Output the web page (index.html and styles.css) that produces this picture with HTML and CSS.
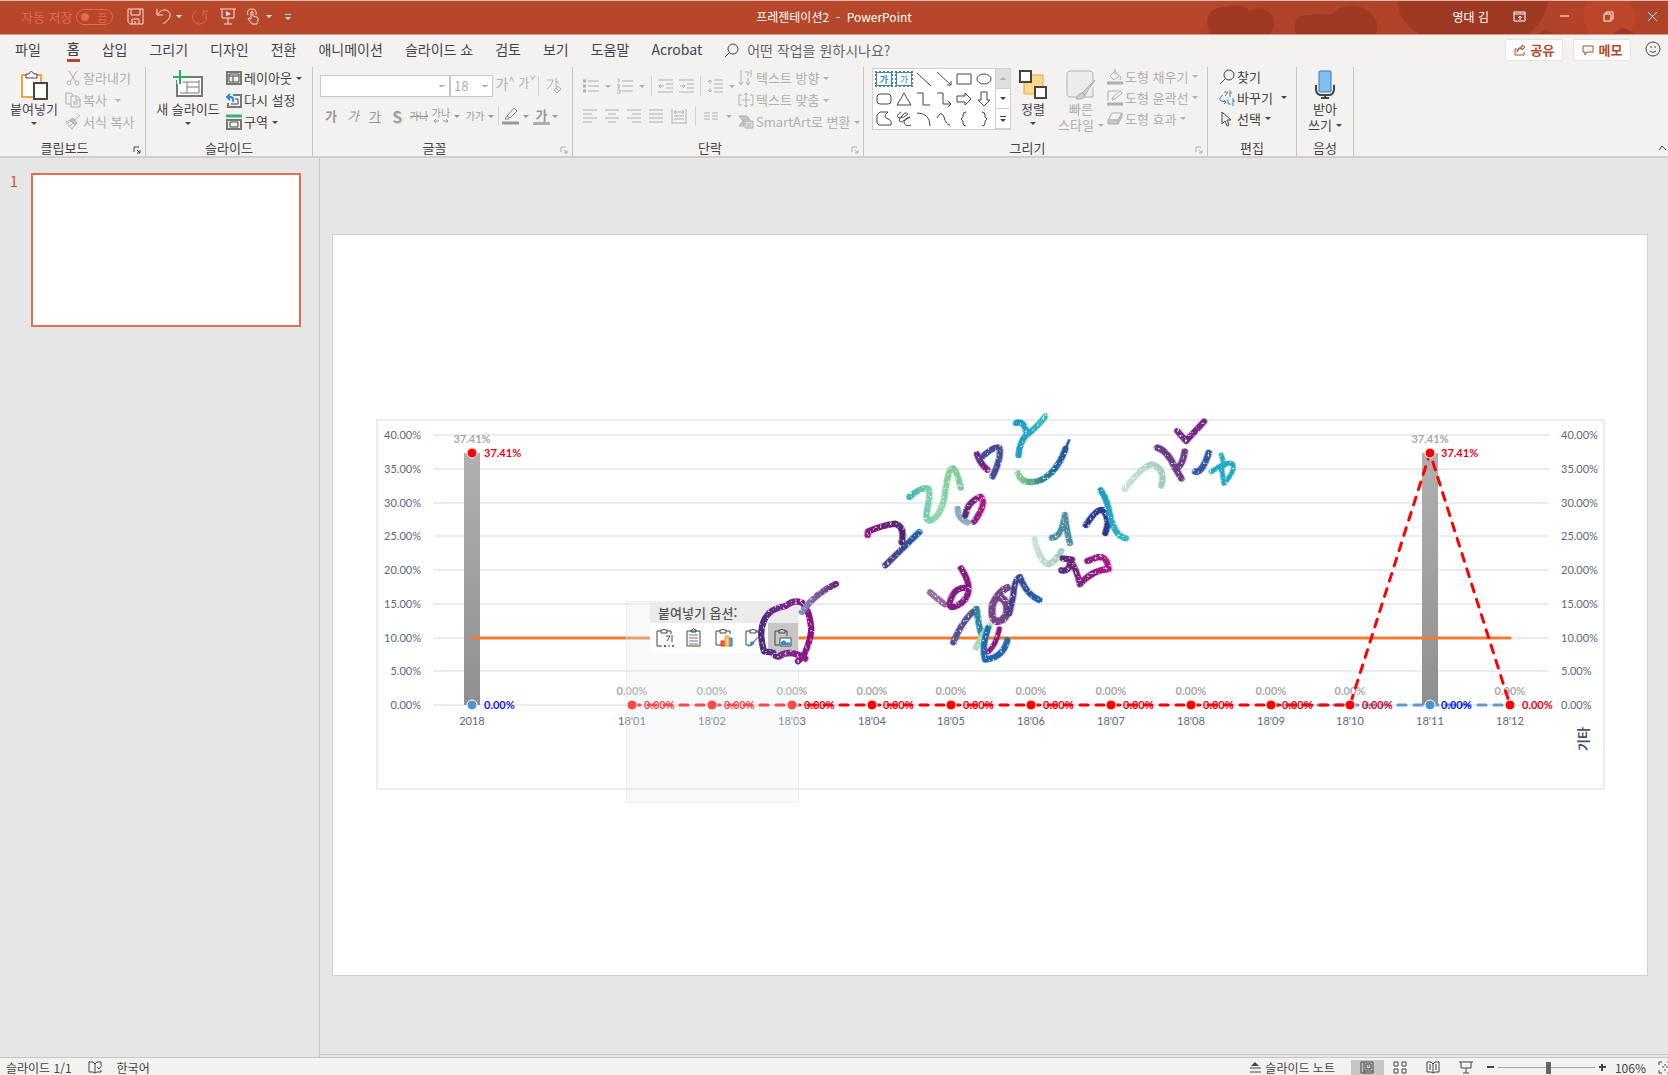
FILE: index.html
```html
<!DOCTYPE html>
<html lang="ko">
<head>
    <meta charset="UTF-8">
    <meta name="viewport" content="width=device-width, initial-scale=1.0">
    <title>프레젠테이션2 - PowerPoint</title>
    <link rel="stylesheet" href="styles.css">
</head>
<body>
    <header class="titlebar">
        <svg class="titlebar-art" width="470" height="33" viewBox="0 0 470 33" aria-hidden="true">
            <path class="art-mid" d="M0 33Q20 0 60 0H470V33Z"/>
            <path class="art-dark" d="M12 33Q2 8 28 5Q44 2 52 10Q62 4 70 10Q82 22 72 33ZM98 33Q92 14 112 14Q126 12 134 14Q142 3 160 5Q184 14 178 33ZM200 0H350Q346 22 330 33H222Q200 22 200 0Z"/>
            <path class="art-light" d="M390 0H430Q446 18 430 33H392Q380 14 390 0Z"/>
            <path class="art-dark" d="M416 33Q424 22 436 33ZM340 33Q348 26 356 33Z"/>
        </svg>
        <div class="quick-access">
            <span class="autosave">자동 저장</span>
            <button class="toggle" aria-label="자동 저장"><span class="toggle-dot"></span>끔</button>
            <button class="qa-save" aria-label="저장"><svg width="17" height="17" viewBox="0 0 17 17"><path d="M1 1H16V16H3L1 14ZM4 1V7H13V1M5 16V11H12V16M8 16V13"/></svg></button>
            <button class="qa-undo" aria-label="실행 취소"><svg width="16" height="17" viewBox="0 0 16 17"><path d="M1 1V7H7M1 7Q5 1 10 2Q15 4 14 9Q12 13 7 16"/></svg><span class="caret"></span></button>
            <button class="qa-redo" aria-label="다시 실행"><svg width="17" height="17" viewBox="0 0 17 17"><path d="M5 3A7 7 0 1 0 12 3M12 8V3H17"/></svg></button>
            <button class="qa-show" aria-label="처음부터"><svg width="16" height="17" viewBox="0 0 16 17"><path d="M0 1H16M2 1V10H14V1M8 10V16M4 16H12"/><path class="solid" d="M6 3L11 6L6 8Z"/></svg></button>
            <button class="qa-touch" aria-label="터치 모드"><svg width="14" height="17" viewBox="0 0 14 17"><path d="M5 11V4Q6 2 7 4V8L11 9Q13 10 12 12L11 16H6L2 11Q2 9 5 11M2 7Q0 1 6 1Q11 1 10 7"/></svg><span class="caret"></span></button>
            <button class="qa-more" aria-label="빠른 실행 도구 모음 사용자 지정"><span class="bar"></span><span class="caret"></span></button>
        </div>
        <div class="doc-title">프레젠테이션2&nbsp; - &nbsp;PowerPoint</div>
        <div class="window-area">
            <span class="user">영대 김</span>
            <button aria-label="리본 메뉴 표시 옵션"><svg width="13" height="11" viewBox="0 0 13 11"><path d="M1 1H12V10H1ZM1 3H12M7 9V5M5 7L7 5L9 7"/></svg></button>
            <button aria-label="최소화"><svg width="11" height="11" viewBox="0 0 11 11"><path d="M1 5H10"/></svg></button>
            <button aria-label="이전 크기로"><svg width="11" height="11" viewBox="0 0 11 11"><path d="M1 3H8V10H1ZM3 3V1H10V8H8"/></svg></button>
            <button aria-label="닫기"><svg width="11" height="11" viewBox="0 0 11 11"><path d="M1 1L10 10M10 1L1 10"/></svg></button>
        </div>
    </header>

    <nav class="tabs">
        <button class="tab tab-file">파일</button>
        <button class="tab tab-active">홈</button>
        <button class="tab">삽입</button>
        <button class="tab">그리기</button>
        <button class="tab">디자인</button>
        <button class="tab">전환</button>
        <button class="tab">애니메이션</button>
        <button class="tab">슬라이드 쇼</button>
        <button class="tab">검토</button>
        <button class="tab">보기</button>
        <button class="tab">도움말</button>
        <button class="tab">Acrobat</button>
        <label class="tell-me" for="tellMe">
            <svg class="icon" width="15" height="15" viewBox="0 0 15 15"><circle cx="9" cy="6" r="5"/><path d="M5 10L1 14"/></svg>
            <input id="tellMe" type="text" placeholder="어떤 작업을 원하시나요?">
        </label>
        <div class="tab-actions">
            <button class="action"><svg width="12" height="12" viewBox="0 0 12 12"><path d="M3 5H1V11H10V8M3 8Q4 4 8 4V6L11 3L8 1V3Q4 3 3 8"/></svg>공유</button>
            <button class="action"><svg width="12" height="12" viewBox="0 0 12 12"><path d="M1 2H11V8H5L3 11V8H1Z"/></svg>메모</button>
            <button class="smile" aria-label="의견 보내기"><svg class="icon" width="17" height="17" viewBox="0 0 17 17"><circle cx="8" cy="8" r="7"/><path d="M6 5V7M10 5V7M5 10Q8 13 11 10"/></svg></button>
        </div>
    </nav>

    <section class="ribbon">
        <div class="group group-clipboard">
            <div class="group-body">
                <button class="big big-paste">
                    <svg class="icon" width="28" height="30" viewBox="0 0 28 30"><path fill="#fff" stroke="#f2a33c" stroke-width="2" d="M2 5H21V27H2Z"/><path fill="#fff" d="M6 8V4H9Q11 -1 14 4H17V8Z"/><path fill="#fff" stroke-width="2" d="M14 13H27V29H14Z"/></svg>
                    <span>붙여넣기</span><span class="caret"></span>
                </button>
                <div class="rows">
                    <button class="row off"><svg class="icon" width="16" height="16" viewBox="0 0 16 16"><path d="M4 1L11 12M12 1L5 12"/><circle cx="4" cy="13" r="2"/><circle cx="12" cy="13" r="2"/></svg>잘라내기</button>
                    <button class="row off"><svg class="icon" width="16" height="16" viewBox="0 0 16 16"><path d="M6 12H1V1H6L8 3M6 4H12L15 7V15H6ZM11 4V8H15M8 10H13M8 12H13"/></svg>복사<span class="caret caret-far"></span></button>
                    <button class="row off"><svg class="icon" width="16" height="16" viewBox="0 0 16 16"><path fill="#c8c6c4" d="M15 1L10 6M8 4L12 9L10 11L5 6Z"/><path d="M5 6L1 8L7 15L10 11M3 9L6 7M5 12L8 9"/></svg>서식 복사</button>
                </div>
            </div>
            <div class="group-label"><span>클립보드</span><button class="launcher" aria-label="클립보드 옵션"><svg class="icon" width="8" height="8" viewBox="0 0 8 8"><path d="M1 6V1H6M4 4L7 7M7 4V7H4"/></svg></button></div>
        </div>

        <div class="group group-slides">
            <div class="group-body">
                <button class="big big-slide">
                    <svg class="icon" width="30" height="30" viewBox="0 0 30 30"><path fill="#fff" stroke="#777" stroke-width="2" d="M4 7H29V26H4Z"/><path stroke="#777" d="M7 12H26M14 12V23M14 17H26M7 23H26V10"/><path stroke="#f3f2f1" stroke-width="6" d="M0 7H12M7 1V14"/><path stroke="#22b05a" stroke-width="2" d="M0 7H14M7 0V14"/></svg>
                    <span>새 슬라이드</span><span class="caret"></span>
                </button>
                <div class="rows">
                    <button class="row"><svg class="icon" width="16" height="14" viewBox="0 0 16 14"><path stroke="#777" stroke-width="2" d="M1 1H15V13H1Z"/><path d="M3 5H13M7 5V11M3 3H13V11H3Z"/></svg>레이아웃<span class="caret"></span></button>
                    <button class="row"><svg class="icon" width="16" height="15" viewBox="0 0 16 15"><path stroke="#777" stroke-width="2" d="M7 2H15V14H2V10"/><path d="M5 11H12V6H9"/><path stroke="#2b8ad0" stroke-width="2" d="M4 1L1 4L4 7M1 4H5Q8 5 7 9"/></svg>다시 설정</button>
                    <button class="row"><svg class="icon" width="16" height="16" viewBox="0 0 16 16"><path stroke="#3cb371" stroke-width="3" d="M0 2H16"/><path stroke="#777" stroke-width="2" d="M1 6H15V15H1Z"/><path d="M4 8H12V13H4Z"/></svg>구역<span class="caret"></span></button>
                </div>
            </div>
            <div class="group-label"><span>슬라이드</span></div>
        </div>

        <div class="group group-font off">
            <div class="group-body stack">
                <div class="tools">
                    <select class="box font-name" aria-label="글꼴"><option></option></select>
                    <select class="box font-size" aria-label="글꼴 크기"><option>18</option></select>
                    <button class="glyph grow" aria-label="글꼴 크기 크게">가<sup>^</sup></button>
                    <button class="glyph grow small" aria-label="글꼴 크기 작게">가<sup>ˇ</sup></button>
                    <span class="sep"></span>
                    <button class="glyph" aria-label="모든 서식 지우기"><svg class="icon" width="18" height="18" viewBox="0 0 18 18"><path d="M2 3H8Q7 9 2 12M11 1V10M11 5H14M9 13L13 9L16 12L12 16ZM11 11L14 14"/></svg></button>
                </div>
                <div class="tools letters">
                    <button class="glyph"><b>가</b></button>
                    <button class="glyph"><i>가</i></button>
                    <button class="glyph"><u>가</u></button>
                    <button class="glyph shadow-s">S</button>
                    <button class="glyph tiny"><s>가나</s></button>
                    <button class="glyph tiny spacing"><span>가나</span><svg class="icon" width="16" height="6" viewBox="0 0 16 6"><path d="M1 3H6M10 3H15M3 1L1 3L3 5M13 1L15 3L13 5"/></svg></button>
                    <span class="caret"></span>
                    <button class="glyph tiny">가가</button>
                    <span class="caret"></span>
                    <span class="sep"></span>
                    <button class="glyph" aria-label="강조 색"><svg class="icon" width="17" height="18" viewBox="0 0 17 18"><path stroke="#8a8886" d="M5 9L12 1L15 4L8 11ZM5 9L3 12H7"/><path stroke-width="3" d="M0 16H17"/></svg></button>
                    <span class="caret"></span>
                    <button class="glyph swatch"><b>가</b></button>
                    <span class="caret"></span>
                </div>
            </div>
            <div class="group-label"><span>글꼴</span><button class="launcher" aria-label="글꼴 옵션"><svg class="icon" width="8" height="8" viewBox="0 0 8 8"><path d="M1 6V1H6M4 4L7 7M7 4V7H4"/></svg></button></div>
        </div>

        <div class="group group-paragraph off">
            <div class="group-body">
                <div class="stack">
                    <div class="tools lines">
                        <button class="glyph" aria-label="글머리 기호"><svg class="icon" width="16" height="16" viewBox="0 0 16 16"><path d="M5 3H16M5 8H16M5 13H16"/><path stroke-width="3" d="M0 3H3M0 8H3M0 13H3"/></svg></button>
                        <span class="caret"></span>
                        <button class="glyph" aria-label="번호 매기기"><svg class="icon" width="16" height="16" viewBox="0 0 16 16"><path d="M5 3H16M5 8H16M5 13H16M1 1H2V5M0 7H3L1 10H3M0 12H3V15H0"/></svg></button>
                        <span class="caret"></span>
                        <span class="sep"></span>
                        <button class="glyph" aria-label="목록 수준 줄임"><svg class="icon" width="15" height="16" viewBox="0 0 15 16"><path d="M0 2H15M8 6H15M8 10H15M0 14H15M1 8H6M3 6L1 8L3 10"/></svg></button>
                        <button class="glyph" aria-label="목록 수준 늘림"><svg class="icon" width="15" height="16" viewBox="0 0 15 16"><path d="M0 2H15M8 6H15M8 10H15M0 14H15M1 8H6M4 6L6 8L4 10"/></svg></button>
                        <span class="sep"></span>
                        <button class="glyph" aria-label="줄 간격"><svg class="icon" width="16" height="16" viewBox="0 0 16 16"><path d="M7 2H16M7 6H16M7 10H16M7 14H16M3 2V6M3 10V14M1 4L3 2L5 4M1 12L3 14L5 12"/></svg></button>
                        <span class="caret"></span>
                    </div>
                    <div class="tools aligns">
                        <button class="glyph" aria-label="왼쪽 맞춤"><svg class="icon" width="14" height="15" viewBox="0 0 14 15"><path d="M0 1H14M0 5H9M0 9H14M0 13H9"/></svg></button>
                        <button class="glyph" aria-label="가운데 맞춤"><svg class="icon" width="14" height="15" viewBox="0 0 14 15"><path d="M0 1H14M3 5H11M0 9H14M3 13H11"/></svg></button>
                        <button class="glyph" aria-label="오른쪽 맞춤"><svg class="icon" width="14" height="15" viewBox="0 0 14 15"><path d="M0 1H14M5 5H14M0 9H14M5 13H14"/></svg></button>
                        <button class="glyph" aria-label="양쪽 맞춤"><svg class="icon" width="14" height="15" viewBox="0 0 14 15"><path d="M0 1H14M0 5H14M0 9H14M0 13H14"/></svg></button>
                        <button class="glyph" aria-label="균등 분할"><svg class="icon" width="16" height="15" viewBox="0 0 16 15"><path d="M1 0V15M15 0V15M3 3H13M5 1L3 3L5 5M11 1L13 3L11 5M3 7H13M3 10H13M1 14H15"/></svg></button>
                        <span class="sep"></span>
                        <button class="glyph" aria-label="열"><svg class="icon" width="14" height="15" viewBox="0 0 14 15"><path d="M0 4H6M8 4H14M0 7H6M8 7H14M0 10H6M8 10H14"/></svg></button>
                        <span class="caret"></span>
                    </div>
                </div>
                <div class="rows">
                    <button class="row off"><svg class="icon" width="16" height="16" viewBox="0 0 16 16"><path d="M3 0V15M1 12L3 15L5 12M10 8V15M8 12L10 15L12 12M7 2H11L9 6M13 0V7"/></svg>텍스트 방향<span class="caret"></span></button>
                    <button class="row off"><svg class="icon" width="16" height="16" viewBox="0 0 16 16"><path d="M4 3H1V13H4M12 3H15V13H12M8 1V15M6 3L8 1L10 3M6 13L8 15L10 13M4 8H12"/></svg>텍스트 맞춤<span class="caret"></span></button>
                    <button class="row off"><svg class="icon" width="16" height="14" viewBox="0 0 16 14"><path fill="#c8c6c4" d="M1 1H9L12 5H6V11H1L5 6Z"/><path fill="#e1dfdd" d="M7 6H15V13H7ZM9 9H13M9 11H13"/></svg>SmartArt로 변환<span class="caret"></span></button>
                </div>
            </div>
            <div class="group-label"><span>단락</span><button class="launcher" aria-label="단락 옵션"><svg class="icon" width="8" height="8" viewBox="0 0 8 8"><path d="M1 6V1H6M4 4L7 7M7 4V7H4"/></svg></button></div>
        </div>

        <div class="group group-drawing">
            <div class="group-body">
                <div class="gallery">
                    <div class="shapes">
                        <button class="textbox">가</button>
                        <button class="textbox vertical">가</button>
                        <button aria-label="선"><svg class="icon" width="16" height="16" viewBox="0 0 16 16"><path d="M1 2L15 15"/></svg></button>
                        <button aria-label="화살표"><svg class="icon" width="16" height="16" viewBox="0 0 16 16"><path d="M1 1L15 14M15 10V14H11"/></svg></button>
                        <button aria-label="직사각형"><svg class="icon" width="16" height="16" viewBox="0 0 16 16"><path d="M1 3H15V13H1Z"/></svg></button>
                        <button aria-label="타원"><svg class="icon" width="16" height="16" viewBox="0 0 16 16"><ellipse cx="8" cy="8" rx="7" ry="5"/></svg></button>
                        <button aria-label="둥근 직사각형"><svg class="icon" width="16" height="16" viewBox="0 0 16 16"><rect x="1" y="3" width="14" height="10" rx="3"/></svg></button>
                        <button aria-label="삼각형"><svg class="icon" width="16" height="16" viewBox="0 0 16 16"><path d="M8 2L15 14H1Z"/></svg></button>
                        <button aria-label="꺾인 연결선"><svg class="icon" width="16" height="16" viewBox="0 0 16 16"><path d="M1 2H7V14H14"/></svg></button>
                        <button aria-label="꺾인 화살표"><svg class="icon" width="16" height="16" viewBox="0 0 16 16"><path d="M1 2H7V13H15M12 10L15 13L12 16"/></svg></button>
                        <button aria-label="오른쪽 화살표"><svg class="icon" width="16" height="16" viewBox="0 0 16 16"><path d="M1 5H9V2L15 8L9 14V11H1Z"/></svg></button>
                        <button aria-label="아래쪽 화살표"><svg class="icon" width="16" height="16" viewBox="0 0 16 16"><path d="M5 1V9H2L8 15L14 9H11V1Z"/></svg></button>
                        <button aria-label="자유형"><svg class="icon" width="16" height="16" viewBox="0 0 16 16"><path d="M1 4L4 1H12Q6 6 12 8Q16 9 15 14H3L1 12Z"/></svg></button>
                        <button aria-label="자유 곡선"><svg class="icon" width="16" height="16" viewBox="0 0 16 16"><path d="M5 1Q-1 5 3 7Q8 7 12 3Q9 0 6 5Q1 10 5 11Q10 9 14 6Q8 7 8 12Q10 16 15 14"/></svg></button>
                        <button aria-label="원호"><svg class="icon" width="16" height="16" viewBox="0 0 16 16"><path d="M1 2Q14 2 14 15"/></svg></button>
                        <button aria-label="곡선"><svg class="icon" width="16" height="16" viewBox="0 0 16 16"><path d="M1 7Q5 -1 8 6Q10 14 14 14"/></svg></button>
                        <button aria-label="왼쪽 중괄호"><svg class="icon" width="16" height="16" viewBox="0 0 16 16"><path d="M10 1Q7 1 7 4V6L5 8L7 10V12Q7 15 10 15"/></svg></button>
                        <button aria-label="오른쪽 중괄호"><svg class="icon" width="16" height="16" viewBox="0 0 16 16"><path d="M6 1Q9 1 9 4V6L11 8L9 10V12Q9 15 6 15"/></svg></button>
                    </div>
                    <div class="gallery-nav">
                        <button class="disabled" aria-label="위로"><span class="caret up"></span></button>
                        <button aria-label="아래로"><span class="caret"></span></button>
                        <button aria-label="자세히"><span class="bar"></span><span class="caret"></span></button>
                    </div>
                </div>
                <button class="big big-arrange">
                    <svg class="icon" width="28" height="30" viewBox="0 0 28 30"><path fill="#fbd98a" stroke="#f2a33c" d="M5 5H24V24H5Z"/><path fill="#fff" stroke-width="2" d="M1 1H12V12H1ZM16 17H27V28H16Z"/></svg>
                    <span>정렬</span><span class="caret"></span>
                </button>
                <button class="big big-style off">
                    <svg class="icon" width="30" height="30" viewBox="0 0 30 30"><path fill="#ececec" d="M3 1H25L27 3V27H3L1 25V3Z"/><path fill="#f3f2f1" stroke="#f3f2f1" stroke-width="4" d="M29 12L14 28"/><path fill="#d0d0d0" d="M29 10L16 23L19 25ZM16 23Q12 23 10 29Q18 30 19 25Z"/></svg>
                    <span>빠른</span><span>스타일<span class="caret"></span></span>
                </button>
                <div class="rows tight">
                    <button class="row off"><svg class="icon" width="16" height="16" viewBox="0 0 16 16"><path d="M3 7L8 2L12 7L7 11ZM8 0V5M13 7Q15 10 13 11"/><path stroke-width="3" d="M0 14H16"/></svg>도형 채우기<span class="caret"></span></button>
                    <button class="row off"><svg class="icon" width="16" height="16" viewBox="0 0 16 16"><path d="M11 1H1V11M5 10L6 7L13 1L15 3L8 9Z"/><path stroke-width="3" d="M0 14H16"/></svg>도형 윤곽선<span class="caret"></span></button>
                    <button class="row off"><svg class="icon" width="16" height="14" viewBox="0 0 16 14"><path d="M5 1H15L11 8H1Z"/><path fill="#c8c6c4" d="M1 8V12H11L15 5V1L11 8ZM11 8V12"/></svg>도형 효과<span class="caret"></span></button>
                </div>
            </div>
            <div class="group-label"><span>그리기</span><button class="launcher off" aria-label="그리기 옵션"><svg class="icon" width="8" height="8" viewBox="0 0 8 8"><path d="M1 6V1H6M4 4L7 7M7 4V7H4"/></svg></button></div>
        </div>

        <div class="group group-edit">
            <div class="group-body">
                <div class="rows tight">
                    <button class="row"><svg class="icon" width="16" height="16" viewBox="0 0 16 16"><circle cx="10" cy="6" r="5"/><path d="M6 10L1 15"/></svg>찾기</button>
                    <button class="row"><svg class="icon" width="16" height="16" viewBox="0 0 16 16"><path stroke="#777" d="M5 2H9L6 6M11 0V7M11 3H13"/><path stroke="#2b8ad0" d="M4 5Q-1 8 2 11L7 12M5 10L7 12L5 14M9 9V14H12M14 8V16M14 11H16"/></svg>바꾸기<span class="caret caret-far"></span></button>
                    <button class="row"><svg class="icon" width="16" height="16" viewBox="0 0 16 16"><path d="M3 1V13L6 10L8 15L10 14L8 9H12Z"/></svg>선택<span class="caret"></span></button>
                </div>
            </div>
            <div class="group-label"><span>편집</span></div>
        </div>

        <div class="group group-voice">
            <div class="group-body">
                <button class="big big-mic">
                    <svg class="icon" width="20" height="30" viewBox="0 0 20 30"><rect x="4" y="1" width="12" height="21" rx="1" fill="#83beec" stroke="#1e7fcb"/><path stroke-width="2" d="M1 15V20Q2 25 6 25H14Q18 25 19 20V15M10 25V28M6 28H14"/></svg>
                    <span>받아</span><span>쓰기<span class="caret"></span></span>
                </button>
            </div>
            <div class="group-label"><span>음성</span></div>
        </div>
        <button class="collapse" aria-label="리본 메뉴 축소"><svg class="icon" width="9" height="6" viewBox="0 0 9 6"><path d="M1 5L4 1L8 5"/></svg></button>
    </section>

    <main class="workspace">
        <aside class="thumbs">
            <span class="thumb-number">1</span>
            <button class="thumb" aria-label="슬라이드 1"></button>
        </aside>
        <section class="editor">
            <div class="slide">
                <!-- combo chart: bars, 10% baseline and two dashed series -->
                <svg class="chart" viewBox="333 235 1314 740">
                    <defs>
                        <linearGradient id="barFill" x1="0" y1="0" x2="0" y2="1"><stop offset="0" stop-color="#b0b0b0"/><stop offset="1" stop-color="#8f8f8f"/></linearGradient>
                    </defs>
                    <rect class="frame" x="377" y="420" width="1227" height="369"/>
                    <path class="grid" d="M433 435H1549M433 469H1549M433 503H1549M433 536H1549M433 570H1549M433 604H1549M433 638H1549M433 671H1549M433 705H1549"/>
                    <rect class="column" x="464" y="453" width="16" height="252"/>
                    <rect class="column" x="1422" y="453" width="16" height="252"/>
                    <path class="line-base" d="M472 638H1510"/>
                    <path class="line-blue" d="M1270 705H1510"/>
                    <g class="axis axis-left">
                        <text x="421" y="439">40.00%</text>
                        <text x="421" y="473">35.00%</text>
                        <text x="421" y="507">30.00%</text>
                        <text x="421" y="540">25.00%</text>
                        <text x="421" y="574">20.00%</text>
                        <text x="421" y="608">15.00%</text>
                        <text x="421" y="642">10.00%</text>
                        <text x="421" y="675">5.00%</text>
                        <text x="421" y="709">0.00%</text>
                    </g>
                    <g class="axis">
                        <text x="1561" y="439">40.00%</text>
                        <text x="1561" y="473">35.00%</text>
                        <text x="1561" y="507">30.00%</text>
                        <text x="1561" y="540">25.00%</text>
                        <text x="1561" y="574">20.00%</text>
                        <text x="1561" y="608">15.00%</text>
                        <text x="1561" y="642">10.00%</text>
                        <text x="1561" y="675">5.00%</text>
                        <text x="1561" y="709">0.00%</text>
                    </g>
                    <g class="axis axis-bottom">
                        <text x="472" y="725">2018</text>
                        <text x="632" y="725">18'01</text>
                        <text x="712" y="725">18'02</text>
                        <text x="792" y="725">18'03</text>
                        <text x="872" y="725">18'04</text>
                        <text x="951" y="725">18'05</text>
                        <text x="1031" y="725">18'06</text>
                        <text x="1111" y="725">18'07</text>
                        <text x="1191" y="725">18'08</text>
                        <text x="1271" y="725">18'09</text>
                        <text x="1350" y="725">18'10</text>
                        <text x="1430" y="725">18'11</text>
                        <text x="1510" y="725">18'12</text>
                    </g>
                    <text class="axis-title" transform="translate(1588 751) rotate(-90)">기타</text>
                    <g class="value value-gray">
                        <text x="472" y="443">37.41%</text>
                        <text x="632" y="695">0.00%</text>
                        <text x="712" y="695">0.00%</text>
                        <text x="792" y="695">0.00%</text>
                        <text x="872" y="695">0.00%</text>
                        <text x="951" y="695">0.00%</text>
                        <text x="1031" y="695">0.00%</text>
                        <text x="1111" y="695">0.00%</text>
                        <text x="1191" y="695">0.00%</text>
                        <text x="1271" y="695">0.00%</text>
                        <text x="1350" y="695">0.00%</text>
                        <text x="1430" y="443">37.41%</text>
                        <text x="1510" y="695">0.00%</text>
                    </g>
                    <g class="value value-red">
                        <text x="484" y="457">37.41%</text>
                        <text x="644" y="709">0.00%</text>
                        <text x="724" y="709">0.00%</text>
                        <text x="804" y="709">0.00%</text>
                        <text x="883" y="709">0.00%</text>
                        <text x="963" y="709">0.00%</text>
                        <text x="1043" y="709">0.00%</text>
                        <text x="1123" y="709">0.00%</text>
                        <text x="1203" y="709">0.00%</text>
                        <text x="1282" y="709">0.00%</text>
                        <text x="1362" y="709">0.00%</text>
                        <text x="1441" y="457">37.41%</text>
                        <text x="1522" y="709">0.00%</text>
                    </g>
                    <g class="value value-blue">
                        <text x="484" y="709">0.00%</text>
                        <text x="1441" y="709">0.00%</text>
                    </g>
                    <path class="line-red" d="M632 705H1350L1430 453L1510 705"/>
                    <g class="dots dots-red">
                        <circle cx="472" cy="453" r="5"/>
                        <circle cx="632" cy="705" r="5"/>
                        <circle cx="712" cy="705" r="5"/>
                        <circle cx="792" cy="705" r="5"/>
                        <circle cx="872" cy="705" r="5"/>
                        <circle cx="951" cy="705" r="5"/>
                        <circle cx="1031" cy="705" r="5"/>
                        <circle cx="1111" cy="705" r="5"/>
                        <circle cx="1191" cy="705" r="5"/>
                        <circle cx="1271" cy="705" r="5"/>
                        <circle cx="1350" cy="705" r="5"/>
                        <circle cx="1430" cy="453" r="5"/>
                        <circle cx="1510" cy="705" r="5"/>
                    </g>
                    <g class="dots dots-blue">
                        <circle cx="472" cy="705" r="5"/>
                        <circle cx="1430" cy="705" r="5"/>
                    </g>
                </svg>

                <div class="paste-menu">
                    <div class="paste-title">붙여넣기 옵션:</div>
                    <div class="paste-options">
                        <button aria-label="대상 테마 사용"><svg class="icon" width="18" height="20" viewBox="0 0 18 20"><path d="M6 18H1V3H5M11 3H15V6M5 5V2H7Q8 0 9 2H11V5ZM10 8H14L11 13M16 7V14"/><path stroke="#e03030" stroke-width="2" d="M8 18H10"/><path stroke="#f0a030" stroke-width="2" d="M12 18H14"/><path stroke="#2b8ad0" stroke-width="2" d="M16 18H18"/></svg></button>
                        <button aria-label="원본 서식 유지"><svg class="icon" width="18" height="20" viewBox="0 0 18 20"><path d="M2 3H15V18H2ZM6 4V2H7Q9 -1 10 2H11V4Z"/><path stroke="#2b8ad0" d="M4 7H13M4 13H13"/><path stroke="#e05030" d="M4 10H13M4 16H13"/></svg></button>
                        <button aria-label="차트 포함"><svg class="icon" width="18" height="20" viewBox="0 0 18 20"><path d="M6 17H1V3H5M11 3H15V6M5 5V2H7Q8 0 9 2H11V5Z"/><path fill="#f06030" stroke="#e03030" d="M6 13H10V18H6Z"/><path fill="#5aa5e0" stroke="#2b70c0" d="M14 10H17V18H14Z"/><path fill="#fbd060" stroke="#f0a030" d="M10 8H14V18H10Z"/></svg></button>
                        <button aria-label="데이터 연결"><svg class="icon" width="18" height="20" viewBox="0 0 18 20"><path d="M4 17H1V3H5M11 3H13V5M5 5V2H7Q8 0 9 2H11V5ZM16 7L8 14"/><path fill="#2b8ad0" stroke="#2b8ad0" d="M3 18Q6 18 6 14H9Q9 18 3 18Z"/></svg></button>
                        <button class="picked" aria-label="그림"><svg class="icon" width="18" height="20" viewBox="0 0 18 20"><path d="M5 17H1V3H5M11 3H13V8M5 5V2H7Q8 0 9 2H11V5Z"/><path fill="#fff" d="M6 10H17V18H6Z"/><path fill="#2b8ad0" stroke="none" d="M7 17V14L10 12L13 15L15 14L16 15V17Z"/></svg></button>
                    </div>
                </div>

                <!-- pen strokes drawn over the slide -->
                <svg class="ink" viewBox="333 235 1314 740" aria-hidden="true">
                    <defs>
                        <filter id="glitter" x="-5%" y="-5%" width="110%" height="110%" color-interpolation-filters="sRGB">
                            <feTurbulence type="fractalNoise" baseFrequency="0.4" numOctaves="2" seed="4"/>
                            <feColorMatrix values="0 0 0 0 1  0 0 0 0 1  0 0 0 0 1  5 0 0 0 -3"/>
                            <feComposite in2="SourceGraphic" operator="in" result="specks"/>
                            <feMerge><feMergeNode in="SourceGraphic"/><feMergeNode in="specks"/></feMerge>
                        </filter>
                        <linearGradient id="ring"><stop offset="0" stop-color="#4b2b80"/><stop offset=".5" stop-color="#7a2a8a"/><stop offset="1" stop-color="#8c1280"/></linearGradient>
                        <linearGradient id="violet"><stop offset="0" stop-color="#8888b8"/><stop offset="1" stop-color="#68267e"/></linearGradient>
                        <linearGradient id="plum"><stop offset="0" stop-color="#8c1a80"/><stop offset="1" stop-color="#4a2570"/></linearGradient>
                        <linearGradient id="berry"><stop offset="0" stop-color="#5a2a78"/><stop offset="1" stop-color="#b01688"/></linearGradient>
                        <linearGradient id="navy"><stop offset="0" stop-color="#4c3c88"/><stop offset="1" stop-color="#1f62aa"/></linearGradient>
                        <linearGradient id="teal"><stop offset="0" stop-color="#3cb8b0"/><stop offset=".5" stop-color="#8ad8ac"/><stop offset="1" stop-color="#80c894"/></linearGradient>
                        <linearGradient id="cyan"><stop offset="0" stop-color="#1898c4"/><stop offset="1" stop-color="#38bcb8"/></linearGradient>
                        <linearGradient id="smile"><stop offset="0" stop-color="#8cd090"/><stop offset=".5" stop-color="#308890"/><stop offset="1" stop-color="#1c50a0"/></linearGradient>
                        <linearGradient id="mint"><stop offset="0" stop-color="#c8e4d4"/><stop offset="1" stop-color="#a0ccc0"/></linearGradient>
                    </defs>
                    <g class="strokes" filter="url(#glitter)">
                        <g transform="translate(360 410) scale(.3333)">
                            <path stroke="url(#ring)" d="M1336 746Q1290 716 1256 740Q1244 740 1240 728L1212 724Q1194 664 1216 624Q1232 596 1278 588Q1300 568 1326 578Q1350 600 1354 660Q1350 700 1330 738L1314 754"/>
                            <path stroke="url(#violet)" d="M1326 606Q1366 550 1428 522"/>
                        </g>
                        <g transform="translate(850 405) scale(.3333)">
                            <path stroke="url(#plum)" d="M53 390L54 379Q100 360 136 356Q166 366 155 412"/>
                            <path stroke="url(#navy)" d="M106 481L208 381"/>
                            <path stroke="url(#teal)" d="M178 276Q220 242 236 252Q242 268 232 312Q224 350 242 346Q274 332 284 272Q294 186 310 190Q322 200 332 248"/>
                            <path stroke="#88aabe" d="M323 312Q324 342 352 352"/>
                            <path stroke="url(#berry)" d="M346 332Q352 290 392 275Q412 296 372 350"/>
                            <path stroke="#7c1880" d="M381 148Q392 178 412 194"/>
                            <path stroke="#3f4c96" d="M390 162Q430 122 448 128Q456 156 428 214"/>
                            <path stroke="url(#cyan)" d="M498 54Q524 44 530 88Q508 112 506 150M530 90Q564 64 584 36"/>
                            <path stroke="#38bcc8" stroke-width="8" d="M572 48L588 28"/>
                            <path stroke="url(#smile)" d="M504 205Q514 240 566 228Q620 206 646 132"/>
                            <path stroke="#1c559e" stroke-width="8" d="M642 144L657 106"/>
                            <path stroke="url(#mint)" d="M824 252Q880 180 905 178Q948 190 934 242"/>
                            <path stroke="#6c3c84" stroke-width="20" d="M922 128Q952 136 974 186L994 220M1004 140Q1000 174 982 190"/>
                            <path stroke="#782488" d="M982 78L1008 108L1062 50"/>
                            <path stroke="#3058a0" stroke-width="20" d="M1036 200Q1056 206 1076 144"/>
                            <path stroke="#22aac4" stroke-width="15" d="M1114 150L1122 176L1084 200M1110 192Q1138 164 1150 180Q1154 200 1122 236L1116 196"/>
                            <path stroke="#283890" d="M708 360Q742 306 760 316Q782 344 766 384"/>
                            <path stroke="url(#cyan)" d="M752 256Q770 276 780 330Q794 394 828 400"/>
                            <path stroke="#4c8ea0" d="M606 398Q634 398 645 330Q650 380 660 414"/>
                            <path stroke="url(#mint)" d="M554 402Q568 470 596 478Q620 466 634 438"/>
                            <path stroke="url(#berry)" d="M638 460L666 464M634 496Q660 502 660 466Q680 492 690 538Q724 496 776 492Q770 450 742 457L712 468"/>
                            <path stroke="#906aa0" d="M240 562Q260 580 284 598"/>
                            <path stroke="#841a80" d="M333 490Q384 566 322 602Q286 618 306 574Q318 546 350 548"/>
                            <path stroke="#75458a" stroke-width="22" d="M472 548Q444 560 428 598Q420 646 442 650Q476 644 470 604Q464 574 440 578"/>
                            <path stroke="url(#navy)" d="M478 625L490 570Q494 520 510 516Q530 570 568 585"/>
                            <path stroke="#58508e" d="M310 712Q340 640 378 614"/>
                            <path stroke="#2888a0" d="M380 612Q384 656 396 694"/>
                            <path stroke="#a8d8b8" d="M378 728Q396 690 418 662"/>
                            <path stroke="#8a1680" stroke-width="16" d="M448 672Q438 720 416 740"/>
                            <path stroke="#2068ac" d="M414 670Q394 730 405 764Q460 758 472 706"/>
                        </g>
                    </g>
                </svg>
            </div>
        </section>
    </main>

    <footer class="status">
        <span>슬라이드 1/1</span>
        <button class="spell" aria-label="맞춤법 검사"><svg class="icon" width="15" height="13" viewBox="0 0 15 13"><path d="M7 3V12L5 11H1V1H5L7 3L9 1H13V4M7 12L9 11H13V9M9 6L11 8L14 4"/></svg></button>
        <button>한국어</button>
        <div class="status-right">
            <button class="notes"><svg class="icon" width="11" height="12" viewBox="0 0 11 12"><path d="M0 6H11M0 10H11"/><path fill="#444" stroke="none" d="M5 0L9 4H1Z"/></svg>슬라이드 노트</button>
            <button class="view view-active" aria-label="기본"><svg class="icon" width="14" height="13" viewBox="0 0 14 13"><path d="M1 1H13V12H1ZM4 1V12M6 3H11V8H6ZM4 10H13M8 5H9"/></svg></button>
            <button class="view" aria-label="여러 슬라이드"><svg class="icon" width="14" height="13" viewBox="0 0 14 13"><path d="M1 1H5V5H1ZM9 1H13V5H9ZM1 8H5V12H1ZM9 8H13V12H9Z"/></svg></button>
            <button class="view" aria-label="읽기용 보기"><svg class="icon" width="14" height="13" viewBox="0 0 14 13"><path d="M7 3V12L5 11H1V1H5L7 3L9 1H13V11H9L7 12M3 4H5M3 6H5M3 8H5M9 4H11M9 6H11M9 8H11"/></svg></button>
            <button class="view" aria-label="슬라이드 쇼"><svg class="icon" width="14" height="13" viewBox="0 0 14 13"><path d="M0 1H14M2 1V7H12V1M7 7V12M4 12H10"/></svg></button>
            <button class="zoom-step" aria-label="축소"><svg class="icon" width="9" height="9" viewBox="0 0 9 9"><path stroke-width="2" d="M1 4H8"/></svg></button>
            <input class="zoom" type="range" min="0" max="100" value="52" aria-label="확대/축소">
            <button class="zoom-step" aria-label="확대"><svg class="icon" width="9" height="9" viewBox="0 0 9 9"><path stroke-width="2" d="M1 4H8M4 1V8"/></svg></button>
            <button class="percent">106%</button>
            <button class="fit" aria-label="창에 맞춤"><svg class="icon" width="14" height="13" viewBox="0 0 14 13"><path d="M1 4V1H4M9 1H13V4M1 9V12H4M9 12H13V9M7 3V5M7 8V10M4 6H6M8 6H10"/></svg></button>
        </div>
    </footer>
</body>
</html>
```

FILE: styles.css
```css
* {
    box-sizing: border-box;
}
body {
    height: 100vh;
    margin: 0;
    display: flex;
    flex-direction: column;
    overflow: hidden;
    background-color: #e6e6e6;
    color: #444;
    font-family: "Noto Sans CJK KR", sans-serif;
    font-size: 13px;
    line-height: 16px;
}
button {
    display: flex;
    align-items: center;
    padding: 0;
    border: 0;
    background: none;
    color: inherit;
    font: inherit;
    white-space: nowrap;
}
svg {
    display: block;
    flex: none;
    fill: none;
    stroke: currentColor;
}
.caret {
    display: inline-block;
    flex: none;
    border: 3px solid transparent;
    border-top-color: currentColor;
    border-bottom: 0;
}
.caret.up {
    transform: rotate(180deg);
}
.off {
    color: #b1afad;
}

/* title bar */
.titlebar {
    position: relative;
    flex: none;
    height: 35px;
    display: grid;
    grid-template-columns: 1fr auto 1fr;
    align-items: center;
    padding-bottom: 2px;
    border-top: 1px solid #e3b9ad;
    border-bottom: 1px solid #d39a8a;
    background-color: #b7472a;
    color: #fff;
}
.titlebar-art {
    position: absolute;
    right: 0;
    top: 0;
    stroke: none;
}
.art-mid {
    fill: #b0432a;
}
.art-dark {
    fill: #9e3a24;
}
.art-light {
    fill: #bc4629;
}
.doc-title,
.user {
    font-size: 12px;
}
.quick-access {
    display: flex;
    align-items: center;
    padding-left: 21px;
    color: #fbe3dc;
}
.autosave {
    width: 55px;
    color: #e8694b;
}
.toggle {
    width: 37px;
    height: 16px;
    margin-right: 14px;
    padding: 0 5px 0 4px;
    justify-content: space-between;
    border: 1px solid #e8694b;
    border-radius: 8px;
    color: #e8694b;
    font-size: 11px;
    line-height: 12px;
}
.toggle-dot {
    width: 8px;
    height: 8px;
    border-radius: 50%;
    background-color: #e8694b;
}
.quick-access .solid {
    fill: currentColor;
    stroke: none;
}
.qa-save {
    margin-right: 12px;
}
.qa-undo {
    gap: 4px;
    margin-right: 9px;
}
.qa-redo {
    margin-right: 12px;
    color: #e8694b;
}
.qa-show {
    margin-right: 10px;
}
.qa-touch {
    gap: 6px;
    margin-right: 13px;
}
.qa-more {
    flex-direction: column;
    gap: 2px;
}
.bar {
    width: 6px;
    height: 1px;
    background-color: currentColor;
}
.window-area {
    position: relative;
    display: flex;
    align-items: center;
    justify-content: flex-end;
    gap: 33px;
    padding-right: 10px;
}
.user {
    margin-right: -9px;
}

/* tabs */
.tabs {
    flex: none;
    height: 32px;
    display: flex;
    align-items: stretch;
    gap: 22px;
    padding: 0 6px 0 15px;
    background-color: #f3f2f1;
    font-size: 14px;
}
.tab {
    padding-bottom: 2px;
    border-bottom: 2px solid transparent;
}
.tab-file {
    margin-right: 4px;
}
.tab-active {
    height: 27px;
    padding-top: 4px;
    border-bottom: 3px solid #b7472a;
    font-weight: 500;
}
.tell-me {
    display: flex;
    align-items: center;
    gap: 8px;
    flex: 1;
    padding-bottom: 2px;
}
.tell-me input {
    flex: 1;
    padding: 0;
    border: 0;
    outline: 0;
    background: none;
    font: inherit;
}
.tell-me input::placeholder {
    color: #666;
}
.tab-actions {
    display: flex;
    align-items: center;
    gap: 10px;
    padding-bottom: 3px;
}
.action {
    width: 58px;
    height: 22px;
    justify-content: center;
    gap: 5px;
    border: 1px solid #e6e4e2;
    border-radius: 2px;
    background-color: #fff;
    color: #b7472a;
    font-size: 13px;
    font-weight: 700;
}
.smile {
    margin-left: 4px;
}

/* ribbon */
.ribbon {
    flex: none;
    display: flex;
    height: 91px;
    border-bottom: 2px solid #d0cfce;
    background-color: #f3f2f1;
}
.group {
    flex: none;
    display: flex;
    flex-direction: column;
    border-right: 1px solid #c8c6c4;
}
.group-clipboard {
    width: 146px;
}
.group-slides {
    width: 167px;
}
.group-font {
    width: 260px;
}
.group-paragraph {
    width: 291px;
}
.group-drawing {
    width: 344px;
}
.group-edit {
    width: 89px;
}
.group-voice {
    width: 57px;
}
.group-body {
    flex: 1;
    display: flex;
    align-items: flex-start;
}
.group-label {
    display: flex;
    align-items: center;
    height: 16px;
    color: #444;
}
.group-label span {
    flex: 1;
    text-align: center;
}
.launcher {
    margin: 4px 4px 0;
}
.off .launcher {
    color: #b1afad;
}
.big {
    flex: none;
    flex-direction: column;
    padding-top: 3px;
}
.big svg {
    margin-bottom: 1px;
}
.big .caret {
    margin-top: 5px;
}
.big span .caret {
    margin: 0 0 3px 4px;
}
.big-paste {
    width: 65px;
    padding-left: 3px;
}
.big-slide {
    width: 80px;
    padding-left: 4px;
}
.big-arrange {
    width: 44px;
}
.big-style {
    width: 52px;
}
.big-mic {
    width: 56px;
}
.rows {
    display: flex;
    flex-direction: column;
}
.row {
    height: 22px;
    gap: 2px;
}
.row .caret {
    margin-left: 2px;
}
.row .caret-far {
    margin-left: 6px;
}
.tight .row {
    height: 21px;
}
.tight {
    margin-top: -1px;
}
.group-edit .rows {
    padding-left: 11px;
}
.stack {
    display: flex;
    flex-direction: column;
}
.tools {
    display: flex;
    align-items: center;
    height: 30px;
}
.sep {
    width: 1px;
    height: 20px;
    background-color: #d6d4d2;
}
.group-font .stack {
    padding: 4px 0 0 7px;
}
.box {
    appearance: none;
    height: 22px;
    padding: 0 0 0 3px;
    border: 1px solid #c8c6c4;
    border-radius: 0;
    background-color: #fff;
    background-image: linear-gradient(45deg, transparent 50%, #b1afad 50%), linear-gradient(-45deg, transparent 50%, #b1afad 50%);
    background-repeat: no-repeat;
    background-position: right 7px center, right 4px center;
    background-size: 3px 3px;
    color: #b1afad;
    font: inherit;
}
.font-name {
    width: 130px;
}
.font-size {
    width: 43px;
    margin-right: 1px;
}
.glyph {
    flex: none;
    justify-content: center;
}
.grow {
    width: 22px;
    height: 22px;
    align-items: flex-start;
    font-size: 14px;
}
.grow sup {
    font-size: 11px;
    line-height: 11px;
}
.grow.small {
    font-size: 12px;
}
.grow + .sep {
    margin-right: 6px;
}
.letters {
    color: #9a9896;
}
.letters .glyph {
    width: 22px;
}
.letters .swatch {
    width: 17px;
    border-bottom: 3px solid #b1afad;
    line-height: 15px;
}
.letters .caret {
    margin: 0 4px 0 2px;
}
.letters .tiny {
    font-size: 10px;
    line-height: 10px;
}
.shadow-s {
    font-size: 16px;
    font-weight: 500;
    text-shadow: 1px 1px 1px #ccc;
}
.letters .spacing {
    flex-direction: column;
}
.group-paragraph .stack {
    width: 165px;
    padding: 4px 0 0 10px;
}
.lines {
    gap: 6px;
}
.aligns {
    gap: 8px;
}

/* shape gallery */
.gallery {
    display: flex;
    height: 62px;
    margin: 1px 0 0 8px;
    border: 1px solid #d2d0ce;
    background-color: #fff;
}
.shapes {
    display: grid;
    grid-template-columns: repeat(6, 20px);
    align-items: center;
    padding: 0 1px;
}
.shapes button {
    justify-content: center;
}
.shapes .textbox {
    width: 16px;
    height: 14px;
    justify-self: center;
    border: 1px solid #777;
    outline: 2px dotted #2b8ad0;
    outline-offset: -1px;
    color: #2b8ad0;
    font-size: 9px;
    line-height: 9px;
    font-weight: 700;
}
.shapes .vertical {
    writing-mode: vertical-rl;
    font-weight: 400;
}
.gallery-nav {
    width: 15px;
    display: flex;
    flex-direction: column;
}
.gallery-nav button {
    flex: 1;
    flex-direction: column;
    justify-content: center;
    gap: 2px;
    border-left: 1px solid #d2d0ce;
    border-bottom: 1px solid #d2d0ce;
}
.gallery-nav .disabled {
    background-color: #e1dfdd;
    color: #b1afad;
}
.collapse {
    margin: 78px 1px 0 auto;
    align-self: flex-start;
}

/* workspace */
.workspace {
    flex: 1;
    min-height: 0;
    display: flex;
}
.thumbs {
    flex: none;
    width: 320px;
    display: flex;
    align-items: flex-start;
    gap: 13px;
    padding: 15px 18px 0 10px;
    border-right: 1px solid #c8c6c4;
}
.thumb-number {
    color: #d24726;
    font-size: 14px;
}
.thumb {
    flex: 1;
    aspect-ratio: 7 / 4;
    border: 2px solid #e46c4f;
    background-color: #fff;
}
.editor {
    flex: 1;
    display: flex;
    align-items: center;
    margin-bottom: 2px;
    padding: 0 21px 3px 13px;
    border-bottom: 1px solid #c8c6c4;
}
.slide {
    position: relative;
    width: 100%;
    aspect-ratio: 1314 / 740;
    outline: 1px solid #d0d0d0;
    background-color: #fff;
}
.chart,
.ink {
    width: 100%;
    height: 100%;
}
.ink {
    position: absolute;
    left: 0;
    top: 0;
    pointer-events: none;
}
.strokes {
    stroke-width: 19;
    stroke-linecap: round;
    stroke-linejoin: round;
}
.chart text {
    stroke: none;
    font-family: Lato, sans-serif;
    font-size: 11px;
}
.frame {
    stroke: #d3dae2;
}
.grid {
    stroke: #d3dae2;
}
.column {
    fill: url(#barFill);
    stroke: none;
}
.axis {
    fill: #58677e;
}
.axis-left {
    text-anchor: end;
}
.axis-bottom {
    text-anchor: middle;
}
.chart .axis-title {
    fill: #44546a;
    font-family: "Noto Sans CJK KR", sans-serif;
    font-size: 13px;
    font-weight: 700;
}
.value {
    font-weight: 700;
}
.value-gray {
    fill: #a8a8a8;
    text-anchor: middle;
}
.value-red {
    fill: #f00014;
}
.value-blue {
    fill: #1414f0;
}
.line-base {
    stroke: #ed7d31;
    stroke-width: 3;
    stroke-linecap: round;
}
.line-red,
.line-blue {
    stroke: #f00;
    stroke-width: 3;
    stroke-dasharray: 8 8;
    stroke-linecap: round;
}
.line-blue {
    stroke: #5b9bd5;
}
.dots {
    stroke: #fff;
}
.dots-red {
    fill: #f00;
}
.dots-blue {
    fill: #4a94d8;
}

/* paste options */
.paste-menu {
    position: absolute;
    left: 22.3%;
    top: 49.5%;
    width: 173px;
    height: 202px;
    padding-left: 23px;
    border: 1px solid rgba(220, 226, 226, .5);
    background-color: rgba(232, 240, 238, .3);
}
.paste-title {
    height: 21px;
    padding-left: 8px;
    background-color: #ebebeb;
    color: #555;
    font-weight: 500;
    line-height: 21px;
}
.paste-options {
    display: flex;
    height: 30px;
    background-color: #fff;
}
.paste-options button {
    flex: 1;
    justify-content: center;
}
.paste-options .picked {
    background-color: #c6c6c6;
}

/* status bar */
.status {
    flex: none;
    height: 18px;
    display: flex;
    align-items: center;
    padding: 2px 0 0 6px;
    border-top: 1px solid #c8c6c4;
    background-color: #f3f2f1;
    font-size: 12px;
}
.spell {
    margin: 0 14px 0 16px;
}
.status-right {
    display: flex;
    align-items: center;
    align-self: stretch;
    margin-left: auto;
}
.notes {
    gap: 4px;
    margin-right: 16px;
}
.view {
    width: 33px;
    align-self: stretch;
    justify-content: center;
}
.view-active {
    background-color: #c8c6c4;
}
.zoom-step {
    margin: 0 3px;
}
.zoom {
    appearance: none;
    width: 97px;
    height: 12px;
    margin: 0;
    background: linear-gradient(#a8a6a4, #a8a6a4) no-repeat center / 100% 1px;
}
.zoom::-webkit-slider-thumb {
    appearance: none;
    width: 5px;
    height: 12px;
    background-color: #666;
}
.percent {
    margin-left: 5px;
}
.fit {
    width: 10px;
    margin-left: 12px;
    overflow: hidden;
    justify-content: flex-start;
}
```
